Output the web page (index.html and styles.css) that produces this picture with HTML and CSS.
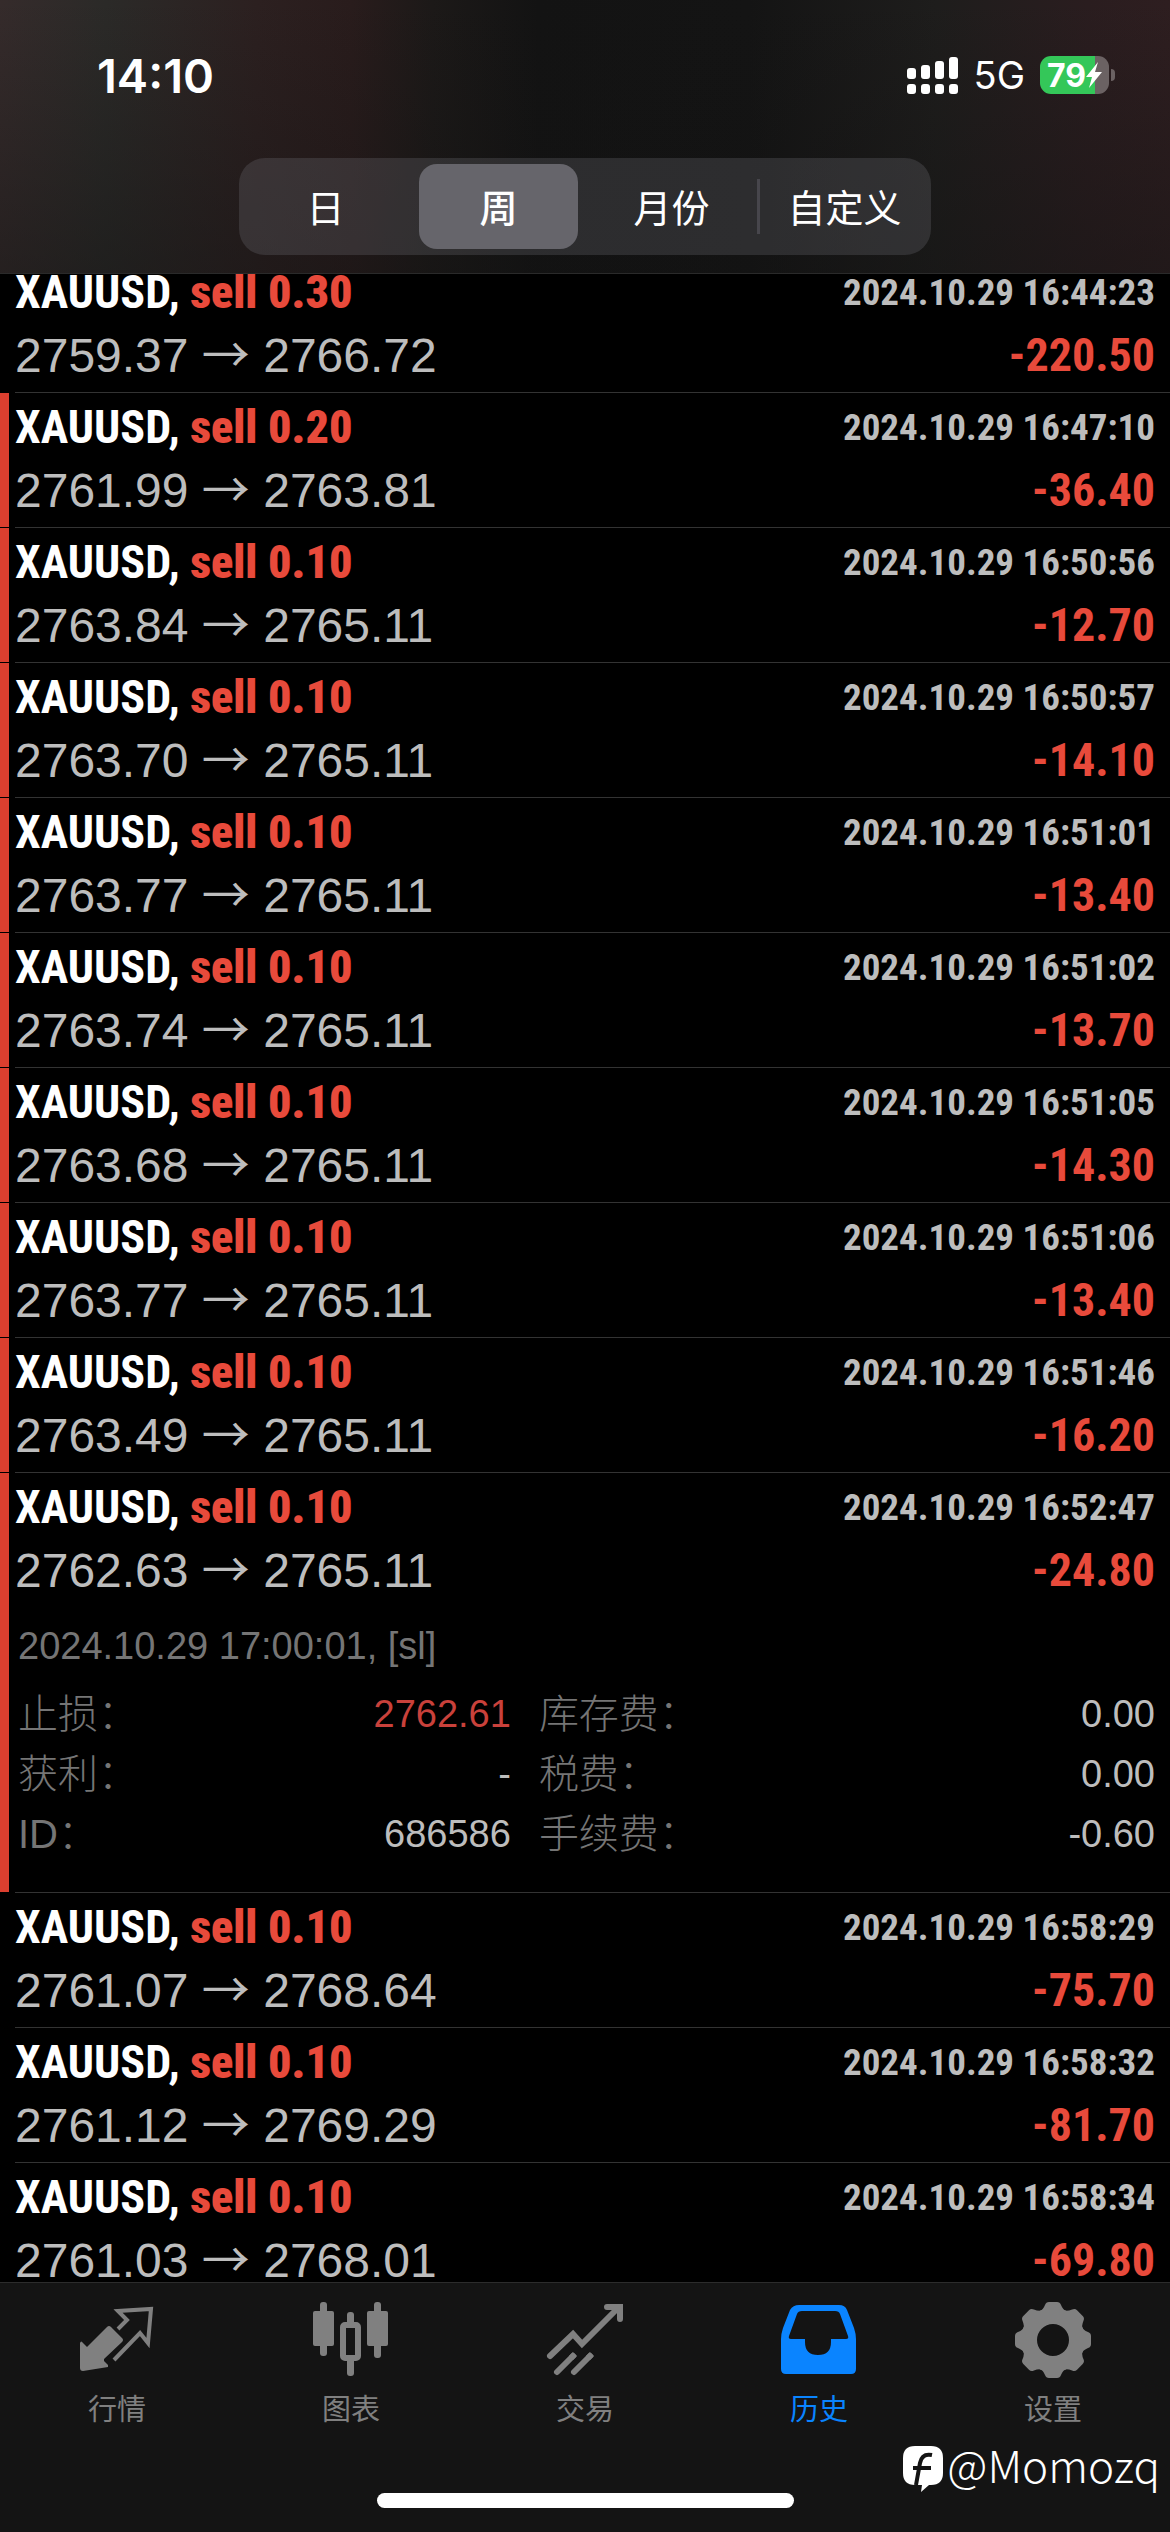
FILE: index.html
```html
<!DOCTYPE html>
<html lang="zh-CN">
<head>
<meta charset="utf-8">
<meta name="viewport" content="width=device-width, initial-scale=1">
<title>历史</title>
<link rel="stylesheet" href="styles.css">
</head>
<body>
<header class="top">
  <div class="status">
    <time class="clock">14:10</time>
    <div class="status-right">
      <svg class="signal" viewBox="0 0 52 38" aria-hidden="true">
        <g fill="#fff">
          <rect x="0" y="12" width="9" height="11" rx="3"/><rect x="14" y="9" width="9" height="14" rx="3"/>
          <rect x="28" y="5" width="9" height="18" rx="3"/><rect x="42" y="1" width="9" height="22" rx="3"/>
          <rect x="0" y="28" width="9" height="10" rx="3"/><rect x="14" y="28" width="9" height="10" rx="3"/>
          <rect x="28" y="28" width="9" height="10" rx="3"/><rect x="42" y="28" width="9" height="10" rx="3"/>
        </g>
      </svg>
      <span class="network">5G</span>
      <div class="battery">
        <span class="level">79</span>
        <svg class="bolt" viewBox="0 0 16 26" aria-hidden="true"><path d="M12 0 0 15h6L3 26 16 10H9z" fill="#fff"/></svg>
      </div>
    </div>
  </div>
  <nav class="segments">
    <button class="segment" type="button">日</button>
    <button class="segment selected" type="button">周</button>
    <button class="segment" type="button">月份</button>
    <button class="segment divided" type="button">自定义</button>
  </nav>
</header>

<main class="history">
  <ul class="deals">
    <li class="deal"><div class="body">
      <div class="line"><span class="symbol">XAUUSD, <b class="loss">sell 0.30</b></span><time class="date">2024.10.29 16:44:23</time></div>
      <div class="line"><span class="price">2759.37 <i class="arrow">→</i> 2766.72</span><span class="profit">-220.50</span></div>
    </div></li>
    <li class="deal marked"><div class="body">
      <div class="line"><span class="symbol">XAUUSD, <b class="loss">sell 0.20</b></span><time class="date">2024.10.29 16:47:10</time></div>
      <div class="line"><span class="price">2761.99 <i class="arrow">→</i> 2763.81</span><span class="profit">-36.40</span></div>
    </div></li>
    <li class="deal marked"><div class="body">
      <div class="line"><span class="symbol">XAUUSD, <b class="loss">sell 0.10</b></span><time class="date">2024.10.29 16:50:56</time></div>
      <div class="line"><span class="price">2763.84 <i class="arrow">→</i> 2765.11</span><span class="profit">-12.70</span></div>
    </div></li>
    <li class="deal marked"><div class="body">
      <div class="line"><span class="symbol">XAUUSD, <b class="loss">sell 0.10</b></span><time class="date">2024.10.29 16:50:57</time></div>
      <div class="line"><span class="price">2763.70 <i class="arrow">→</i> 2765.11</span><span class="profit">-14.10</span></div>
    </div></li>
    <li class="deal marked"><div class="body">
      <div class="line"><span class="symbol">XAUUSD, <b class="loss">sell 0.10</b></span><time class="date">2024.10.29 16:51:01</time></div>
      <div class="line"><span class="price">2763.77 <i class="arrow">→</i> 2765.11</span><span class="profit">-13.40</span></div>
    </div></li>
    <li class="deal marked"><div class="body">
      <div class="line"><span class="symbol">XAUUSD, <b class="loss">sell 0.10</b></span><time class="date">2024.10.29 16:51:02</time></div>
      <div class="line"><span class="price">2763.74 <i class="arrow">→</i> 2765.11</span><span class="profit">-13.70</span></div>
    </div></li>
    <li class="deal marked"><div class="body">
      <div class="line"><span class="symbol">XAUUSD, <b class="loss">sell 0.10</b></span><time class="date">2024.10.29 16:51:05</time></div>
      <div class="line"><span class="price">2763.68 <i class="arrow">→</i> 2765.11</span><span class="profit">-14.30</span></div>
    </div></li>
    <li class="deal marked"><div class="body">
      <div class="line"><span class="symbol">XAUUSD, <b class="loss">sell 0.10</b></span><time class="date">2024.10.29 16:51:06</time></div>
      <div class="line"><span class="price">2763.77 <i class="arrow">→</i> 2765.11</span><span class="profit">-13.40</span></div>
    </div></li>
    <li class="deal marked"><div class="body">
      <div class="line"><span class="symbol">XAUUSD, <b class="loss">sell 0.10</b></span><time class="date">2024.10.29 16:51:46</time></div>
      <div class="line"><span class="price">2763.49 <i class="arrow">→</i> 2765.11</span><span class="profit">-16.20</span></div>
    </div></li>
    <li class="deal marked"><div class="body">
      <div class="line"><span class="symbol">XAUUSD, <b class="loss">sell 0.10</b></span><time class="date">2024.10.29 16:52:47</time></div>
      <div class="line"><span class="price">2762.63 <i class="arrow">→</i> 2765.11</span><span class="profit">-24.80</span></div>
      <div class="details">
        <p class="closed">2024.10.29 17:00:01, [sl]</p>
        <dl class="fields">
          <div class="field"><dt>止损：</dt><dd class="stop">2762.61</dd></div>
          <div class="field"><dt>库存费：</dt><dd>0.00</dd></div>
          <div class="field"><dt>获利：</dt><dd>-</dd></div>
          <div class="field"><dt>税费：</dt><dd>0.00</dd></div>
          <div class="field"><dt>ID：</dt><dd>686586</dd></div>
          <div class="field"><dt>手续费：</dt><dd>-0.60</dd></div>
        </dl>
      </div>
    </div></li>
    <li class="deal"><div class="body">
      <div class="line"><span class="symbol">XAUUSD, <b class="loss">sell 0.10</b></span><time class="date">2024.10.29 16:58:29</time></div>
      <div class="line"><span class="price">2761.07 <i class="arrow">→</i> 2768.64</span><span class="profit">-75.70</span></div>
    </div></li>
    <li class="deal"><div class="body">
      <div class="line"><span class="symbol">XAUUSD, <b class="loss">sell 0.10</b></span><time class="date">2024.10.29 16:58:32</time></div>
      <div class="line"><span class="price">2761.12 <i class="arrow">→</i> 2769.29</span><span class="profit">-81.70</span></div>
    </div></li>
    <li class="deal"><div class="body">
      <div class="line"><span class="symbol">XAUUSD, <b class="loss">sell 0.10</b></span><time class="date">2024.10.29 16:58:34</time></div>
      <div class="line"><span class="price">2761.03 <i class="arrow">→</i> 2768.01</span><span class="profit">-69.80</span></div>
    </div></li>
  </ul>
</main>

<footer class="bottom">
  <nav class="tabs">
    <a class="tab" href="#quotes">
      <svg class="icon" viewBox="0 0 84 84" aria-hidden="true">
        <path d="M5 45Q6 42 8 45l4 4 20-20q2-2 4 0l11 11q2 2 0 4L29 61v2l4 4v2L8 73q-3 0-3-3z" fill="currentColor"/>
        <path d="m43 31 9-9-9-9 33-2-3 34-8-10-26 27" fill="none" stroke="currentColor" stroke-width="4"/>
      </svg>行情</a>
    <a class="tab" href="#chart">
      <svg class="icon" viewBox="0 0 84 84" aria-hidden="true">
        <g fill="currentColor">
          <rect x="4" y="13" width="21" height="35" rx="2"/><rect x="11" y="4" width="7" height="54" rx="3"/>
          <rect x="58" y="13" width="21" height="35" rx="2"/><rect x="65" y="4" width="7" height="56" rx="3"/>
          <rect x="38" y="14" width="7" height="14" rx="3"/><rect x="38" y="60" width="7" height="18" rx="3"/>
        </g>
        <rect x="34" y="27" width="15" height="33" rx="2" fill="none" stroke="currentColor" stroke-width="6"/>
      </svg>图表</a>
    <a class="tab" href="#trade">
      <svg class="icon" viewBox="0 0 84 84" aria-hidden="true">
        <g fill="none" stroke="currentColor" stroke-width="6" stroke-linecap="round">
          <path d="m7 58 23-22 9 10L75 10M64 9h13v12"/><path d="m14 74 16-16M31 74l16-16"/>
        </g>
        <path d="m28 60 4-4M45 60l4-4" stroke="currentColor" stroke-width="6"/>
      </svg>交易</a>
    <a class="tab active" href="#history">
      <svg class="icon" viewBox="0 0 84 84" aria-hidden="true">
        <path fill="currentColor" fill-rule="evenodd" d="M22 7h40q6 0 8 5l7 18q2 6 2 11v30q0 5-5 5H9q-5 0-5-5V41q0-5 2-11l7-18q3-5 9-5zm3 6q-4 0-5 3l-8 22q-1 3 2 3h14v3q0 13 13 13t13-13v-3h15q3 0 2-3l-8-22q-1-3-5-3z"/>
      </svg>历史</a>
    <a class="tab" href="#settings">
      <svg class="icon" viewBox="0 0 84 84" aria-hidden="true">
        <g transform="translate(42 42)">
          <circle r="24" fill="none" stroke="currentColor" stroke-width="16"/>
          <g fill="currentColor">
            <path id="tooth" d="M-14-28Q-10-30-8-35-7-38-4-38H4Q7-38 8-35 10-30 14-28z"/>
            <use href="#tooth" transform="rotate(45)"/><use href="#tooth" transform="rotate(90)"/>
            <use href="#tooth" transform="rotate(135)"/><use href="#tooth" transform="rotate(180)"/>
            <use href="#tooth" transform="rotate(225)"/><use href="#tooth" transform="rotate(270)"/>
            <use href="#tooth" transform="rotate(315)"/>
          </g>
        </g>
      </svg>设置</a>
  </nav>
  <div class="home-bar"></div>
  <div class="credit">
    <svg class="credit-logo" viewBox="0 0 40 46" aria-hidden="true">
      <path d="M12 0h16q12 0 12 12v15q0 12-12 12h-2l-8 7 1-7h-7Q0 39 0 27V12Q0 0 12 0z" fill="#fff"/>
      <path d="M29 9q-10-2-12 8l-4 22M10 22h18" fill="none" stroke="#141414" stroke-width="4"/>
    </svg>
    <span>@Momozq</span>
  </div>
</footer>
</body>
</html>
```

FILE: styles.css
```css
* {
  box-sizing: border-box;
}

body {
  display: flex;
  flex-direction: column;
  height: 100vh;
  margin: 0;
  overflow: hidden;
  background: #000;
  color: #fff;
  font-family: "Liberation Sans", "Noto Sans CJK SC", sans-serif;
}

/* Translucent header */
.top {
  z-index: 1;
  flex: none;
  padding-bottom: 18px;
  border-bottom: 1px solid #2a2a2a;
  background:
    linear-gradient(to bottom, transparent, rgba(18, 18, 18, 0.45)),
    linear-gradient(to right, #352b2b 0%, #2b2a28 9%, #2c2020 22%, #291c1c 30%, #1c1918 37%, #131313 46%, #141414 64%, #1e1d1c 80%, #2a1d1f 93%, #2e1e20 100%);
}

.status {
  display: flex;
  align-items: center;
  justify-content: space-between;
  height: 158px;
  padding: 0 54px 8px 97px;
  font-family: Inter, sans-serif;
}

.clock {
  font-size: 47px;
  font-weight: 600;
}

.status-right {
  display: flex;
  align-items: center;
  gap: 15px;
}

.signal {
  width: 52px;
  height: 38px;
}

.network {
  font-size: 38px;
}

.battery {
  position: relative;
  display: flex;
  align-items: center;
  width: 69px;
  height: 38px;
  margin-right: 7px;
  padding-left: 7px;
  border-radius: 11px;
  background: linear-gradient(to right, #34c759 79%, #6b6263 79%);
}

.battery::after {
  content: "";
  position: absolute;
  left: 71px;
  top: 13px;
  width: 4px;
  height: 12px;
  border-radius: 0 4px 4px 0;
  background: #6b6263;
}

.level {
  font-size: 32px;
  font-weight: 700;
}

.bolt {
  width: 16px;
  height: 26px;
}

.segments {
  display: flex;
  width: calc(100% - 478px);
  height: 97px;
  margin: 0 auto;
  padding: 6px 0;
  border-radius: 26px;
  background: rgba(118, 118, 128, 0.26);
}

.segment {
  position: relative;
  flex: 1;
  margin: 0 7px;
  padding: 0 0 3px;
  border: 0;
  border-radius: 18px;
  background: none;
  color: #fff;
  font: 400 38px "Noto Sans CJK SC", sans-serif;
}

.segment.selected {
  background: #66656b;
  font-weight: 500;
}

.segment.divided::before {
  content: "";
  position: absolute;
  left: -8px;
  top: 15px;
  bottom: 15px;
  width: 3px;
  background: #47464c;
}

/* Deal list, scrolled part of the way under the header */
.history {
  flex: 1;
  min-height: 0;
  overflow: hidden;
}

.deals {
  margin: -16px 0 0;
  padding: 0;
  list-style: none;
}

.deal {
  display: flex;
}

.deal::before {
  content: "";
  flex: none;
  width: 9px;
  margin: 0 6px 1px 0;
}

.marked::before {
  background: #dc3f2f;
}

.body {
  flex: 1;
  padding: 3px 0 5px;
  border-bottom: 1px solid #333;
}

.line {
  display: flex;
  justify-content: space-between;
  height: 63px;
  padding-right: 15px;
  line-height: 63px;
  white-space: nowrap;
}

.symbol,
.date,
.profit {
  font-family: "Roboto Condensed", "Liberation Sans Narrow", "Liberation Sans", sans-serif;
  font-size: 46px;
  font-weight: 700;
}

.loss,
.profit {
  color: #e84a3b;
}

.date {
  color: #bdbdbd;
  font-size: 37px;
}

.price {
  color: #bdbdbd;
  font-size: 48px;
}

.arrow {
  font-family: "Noto Sans CJK SC", sans-serif;
  font-style: normal;
  line-height: 0;
}

.details {
  padding: 14px 15px 23px 3px;
  color: #757575;
  font-size: 38px;
  line-height: 60px;
}

.closed {
  margin: 0 0 8px;
}

.fields {
  display: grid;
  grid-template-columns: 4fr 5fr;
  column-gap: 28px;
  margin: 0;
}

.field {
  display: flex;
  justify-content: space-between;
  height: 60px;
}

.field dt {
  font-size: 40px;
  font-weight: 300;
}

.field dd {
  margin: 0;
  color: #bdbdbd;
}

.field .stop {
  color: #c9413b;
}

/* Tab bar */
.bottom {
  position: relative;
  flex: none;
  padding: 15px 0 24px;
  border-top: 1px solid #2c2c2c;
  background: #141414;
}

.tabs {
  display: flex;
}

.tab {
  display: flex;
  flex: 1;
  flex-direction: column;
  align-items: center;
  gap: 7px;
  color: #808080;
  font: 400 29px/36px "Noto Sans CJK SC", sans-serif;
  text-decoration: none;
}

.tab.active {
  color: #0a84ff;
}

.icon {
  width: 84px;
  height: 84px;
}

.home-bar {
  width: 417px;
  height: 15px;
  margin: 68px auto 0;
  border-radius: 8px;
  background: #fff;
}

.credit {
  position: absolute;
  right: 10px;
  bottom: 40px;
  display: flex;
  align-items: flex-end;
  gap: 4px;
  font: 300 44px/56px "Noto Sans CJK SC", sans-serif;
}

.credit-logo {
  width: 40px;
  height: 46px;
}
```
